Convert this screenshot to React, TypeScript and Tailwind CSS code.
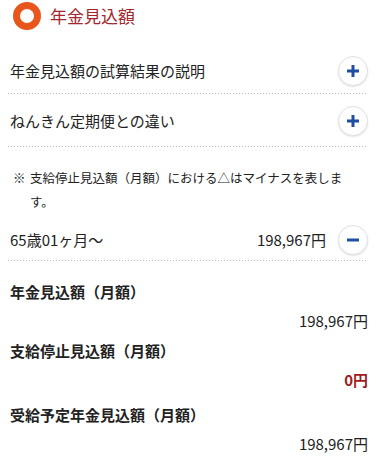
function Dots() {
  return (
    <div className="h-px w-full bg-[repeating-linear-gradient(to_right,#b8b8b8_0px,#b8b8b8_1px,transparent_1px,transparent_3px)]" />
  )
}

function RoundButton({ minus }: { minus?: boolean }) {
  return (
    <span className="flex h-[30px] w-[30px] shrink-0 items-center justify-center rounded-full border border-[#e2e2e2] bg-white shadow-[0_1px_2px_rgba(0,0,0,0.12)]">
      <svg width="14" height="14" viewBox="0 0 14 14">
        <path d="M1 7h12" stroke="#1f4f9e" strokeWidth="3" />
        {!minus && <path d="M7 1v12" stroke="#1f4f9e" strokeWidth="3" />}
      </svg>
    </span>
  )
}

const amounts = [
  { label: '年金見込額（月額）', value: '198,967円' },
  { label: '支給停止見込額（月額）', value: '0円', red: true },
  { label: '受給予定年金見込額（月額）', value: '198,967円' },
]

export default function App() {
  return (
    <div className="h-[463px] w-[378px] overflow-hidden bg-white font-['Noto_Sans_CJK_JP',sans-serif] text-[#222]">
      <div className="flex h-[30px] items-center pl-[13px] pt-[1px]">
        <span className="h-[28px] w-[28px] rounded-full border-[7px] border-[#e8561b]" />
        <h1 className="ml-[9px] text-[17px] leading-none text-[#a2262b]">年金見込額</h1>
      </div>

      <div className="pl-[8px] pr-[10px]">
        <div className="flex items-center justify-between pt-[26px] pb-[7px] pl-[2px]">
          <span className="text-[15px]">年金見込額の試算結果の説明</span>
          <RoundButton />
        </div>
        <Dots />
        <div className="flex items-center justify-between pt-[12px] pb-[10px] pl-[2px]">
          <span className="text-[15px]">ねんきん定期便との違い</span>
          <RoundButton />
        </div>
        <Dots />

        <div className="mt-[19px] flex text-[12.5px] leading-[24px]">
          <span className="ml-[5px] w-[17px] shrink-0">※</span>
          <p className="w-[318px]">支給停止見込額（月額）における△はマイナスを表します。</p>
        </div>

        <div className="flex items-center pt-[11px] pb-[5px] pl-[2px]">
          <span className="flex-1 text-[15px]">65歳01ヶ月～</span>
          <span className="mr-[12px] text-[15px]">198,967円</span>
          <RoundButton minus />
        </div>
        <Dots />

        <div className="mt-[16px] pl-[2px]">
          {amounts.map((a, i) => (
            <div key={a.label} className={i === 2 ? 'mt-[5px]' : ''}>
              <div className="flex h-[30px] items-center text-[15px] font-bold">{a.label}</div>
              <div
                className={`flex h-[29px] items-center justify-end text-[15px] ${
                  a.red ? 'font-bold text-[#a01b1f]' : ''
                }`}
              >
                {a.value}
              </div>
            </div>
          ))}
        </div>
      </div>
    </div>
  )
}
